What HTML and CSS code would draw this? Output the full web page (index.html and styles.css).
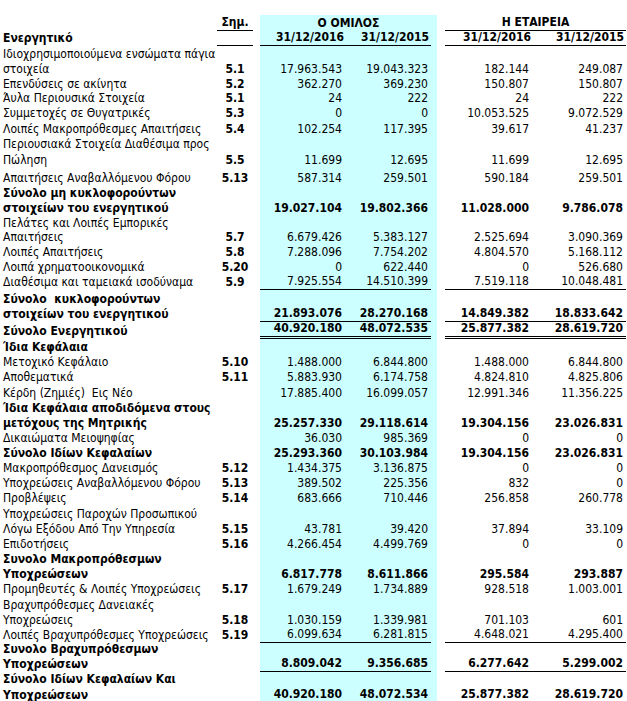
FILE: index.html
```html
<!DOCTYPE html>
<html lang="el">
<head>
<meta charset="utf-8">
<title>Ισολογισμός</title>
<link rel="stylesheet" href="styles.css">
</head>
<body>
<table class="bs">
<colgroup>
<col class="c-lbl"><col class="c-note"><col class="c-sp1"><col class="c-a"><col class="c-b"><col class="c-sp2"><col class="c-sp3"><col class="c-c"><col class="c-d">
</colgroup>
<tbody>
<tr class="h16"><td></td><td class="note hd ul">Σημ.</td><td></td><td class="cy grp" colspan="3">Ο ΟΜΙΛΟΣ</td><td></td><td class="grp ul" colspan="2">Η ΕΤΑΙΡΕΙΑ</td></tr>
<tr class="bold"><td class="lbl">Ενεργητικό</td><td class="note ul"></td><td></td><td class="num a cy ul hdr">31/12/2016</td><td class="num b cy ul hdr">31/12/2015</td><td class="cy"></td><td></td><td class="num c ul hdr">31/12/2016</td><td class="num d ul hdr">31/12/2015</td></tr>
<tr class="h16"><td class="lbl">Ιδιοχρησιμοποιούμενα ενσώματα πάγια</td><td class="note"></td><td></td><td class="num a cy"></td><td class="num b cy"></td><td class="cy"></td><td></td><td class="num c"></td><td class="num d"></td></tr>
<tr><td class="lbl">στοιχεία</td><td class="note">5.1</td><td></td><td class="num a cy">17.963.543</td><td class="num b cy">19.043.323</td><td class="cy"></td><td></td><td class="num c">182.144</td><td class="num d">249.087</td></tr>
<tr><td class="lbl">Επενδύσεις σε ακίνητα</td><td class="note">5.2</td><td></td><td class="num a cy">362.270</td><td class="num b cy">369.230</td><td class="cy"></td><td></td><td class="num c">150.807</td><td class="num d">150.807</td></tr>
<tr class="h14"><td class="lbl">Άυλα Περιουσικά Στοιχεία</td><td class="note">5.1</td><td></td><td class="num a cy">24</td><td class="num b cy">222</td><td class="cy"></td><td></td><td class="num c">24</td><td class="num d">222</td></tr>
<tr><td class="lbl">Συμμετοχές σε Θυγατρικές</td><td class="note">5.3</td><td></td><td class="num a cy">0</td><td class="num b cy">0</td><td class="cy"></td><td></td><td class="num c">10.053.525</td><td class="num d">9.072.529</td></tr>
<tr class="h16"><td class="lbl">Λοιπές Μακροπρόθεσμες Απαιτήσεις</td><td class="note">5.4</td><td></td><td class="num a cy">102.254</td><td class="num b cy">117.395</td><td class="cy"></td><td></td><td class="num c">39.617</td><td class="num d">41.237</td></tr>
<tr><td class="lbl">Περιουσιακά Στοιχεία Διαθέσιμα προς</td><td class="note"></td><td></td><td class="num a cy"></td><td class="num b cy"></td><td class="cy"></td><td></td><td class="num c"></td><td class="num d"></td></tr>
<tr class="h16"><td class="lbl">Πώληση</td><td class="note">5.5</td><td></td><td class="num a cy">11.699</td><td class="num b cy">12.695</td><td class="cy"></td><td></td><td class="num c">11.699</td><td class="num d">12.695</td></tr>
<tr class="h18"><td class="lbl">Απαιτήσεις Αναβαλλόμενου Φόρου</td><td class="note">5.13</td><td></td><td class="num a cy">587.314</td><td class="num b cy">259.501</td><td class="cy"></td><td></td><td class="num c">590.184</td><td class="num d">259.501</td></tr>
<tr class="bold"><td class="lbl">Σύνολο μη κυκλοφορούντων</td><td class="note"></td><td></td><td class="num a cy"></td><td class="num b cy"></td><td class="cy"></td><td></td><td class="num c"></td><td class="num d"></td></tr>
<tr class="bold"><td class="lbl">στοιχείων του ενεργητικού</td><td class="note"></td><td></td><td class="num a cy">19.027.104</td><td class="num b cy">19.802.366</td><td class="cy"></td><td></td><td class="num c">11.028.000</td><td class="num d">9.786.078</td></tr>
<tr><td class="lbl">Πελάτες και Λοιπές Εμπορικές</td><td class="note"></td><td></td><td class="num a cy"></td><td class="num b cy"></td><td class="cy"></td><td></td><td class="num c"></td><td class="num d"></td></tr>
<tr class="h14"><td class="lbl">Απαιτήσεις</td><td class="note">5.7</td><td></td><td class="num a cy">6.679.426</td><td class="num b cy">5.383.127</td><td class="cy"></td><td></td><td class="num c">2.525.694</td><td class="num d">3.090.369</td></tr>
<tr><td class="lbl">Λοιπές Απαιτήσεις</td><td class="note">5.8</td><td></td><td class="num a cy">7.288.096</td><td class="num b cy">7.754.202</td><td class="cy"></td><td></td><td class="num c">4.804.570</td><td class="num d">5.168.112</td></tr>
<tr><td class="lbl">Λοιπά χρηματοοικονομικά</td><td class="note">5.20</td><td></td><td class="num a cy">0</td><td class="num b cy">622.440</td><td class="cy"></td><td></td><td class="num c">0</td><td class="num d">526.680</td></tr>
<tr><td class="lbl">Διαθέσιμα και ταμειακά ισοδύναμα</td><td class="note">5.9</td><td></td><td class="num a cy ul">7.925.554</td><td class="num b cy ul">14.510.399</td><td class="cy"></td><td></td><td class="num c ul">7.519.118</td><td class="num d ul">10.048.481</td></tr>
<tr class="bold h17"><td class="lbl">Σύνολο&nbsp; κυκλοφορούντων</td><td class="note"></td><td></td><td class="num a cy"></td><td class="num b cy"></td><td class="cy"></td><td></td><td class="num c"></td><td class="num d"></td></tr>
<tr class="bold"><td class="lbl">στοιχείων του ενεργητικού</td><td class="note"></td><td></td><td class="num a cy ul">21.893.076</td><td class="num b cy ul">28.270.168</td><td class="cy"></td><td></td><td class="num c ul">14.849.382</td><td class="num d ul">18.833.642</td></tr>
<tr class="bold"><td class="lbl">Σύνολο Ενεργητικού</td><td class="note"></td><td></td><td class="num a cy dbl">40.920.180</td><td class="num b cy dbl">48.072.535</td><td class="cy"></td><td></td><td class="num c dbl">25.877.382</td><td class="num d dbl">28.619.720</td></tr>
<tr class="bold h16"><td class="lbl">Ίδια Κεφάλαια</td><td class="note"></td><td></td><td class="num a cy"></td><td class="num b cy"></td><td class="cy"></td><td></td><td class="num c"></td><td class="num d"></td></tr>
<tr><td class="lbl">Μετοχικό Κεφάλαιο</td><td class="note">5.10</td><td></td><td class="num a cy">1.488.000</td><td class="num b cy">6.844.800</td><td class="cy"></td><td></td><td class="num c">1.488.000</td><td class="num d">6.844.800</td></tr>
<tr><td class="lbl">Αποθεματικά</td><td class="note">5.11</td><td></td><td class="num a cy">5.883.930</td><td class="num b cy">6.174.758</td><td class="cy"></td><td></td><td class="num c">4.824.810</td><td class="num d">4.825.806</td></tr>
<tr class="h16"><td class="lbl">Κέρδη (Ζημιές)&nbsp; Εις Νέο</td><td class="note"></td><td></td><td class="num a cy">17.885.400</td><td class="num b cy">16.099.057</td><td class="cy"></td><td></td><td class="num c">12.991.346</td><td class="num d">11.356.225</td></tr>
<tr class="bold"><td class="lbl">Ίδια Κεφάλαια αποδιδόμενα στους</td><td class="note"></td><td></td><td class="num a cy"></td><td class="num b cy"></td><td class="cy"></td><td></td><td class="num c"></td><td class="num d"></td></tr>
<tr class="bold"><td class="lbl">μετόχους της Μητρικής</td><td class="note"></td><td></td><td class="num a cy">25.257.330</td><td class="num b cy">29.118.614</td><td class="cy"></td><td></td><td class="num c">19.304.156</td><td class="num d">23.026.831</td></tr>
<tr><td class="lbl">Δικαιώματα Μειοψηφίας</td><td class="note"></td><td></td><td class="num a cy">36.030</td><td class="num b cy">985.369</td><td class="cy"></td><td></td><td class="num c">0</td><td class="num d">0</td></tr>
<tr class="bold"><td class="lbl">Σύνολο Ιδίων Κεφαλαίων</td><td class="note"></td><td></td><td class="num a cy">25.293.360</td><td class="num b cy">30.103.984</td><td class="cy"></td><td></td><td class="num c">19.304.156</td><td class="num d">23.026.831</td></tr>
<tr><td class="lbl">Μακροπρόθεσμος Δανεισμός</td><td class="note">5.12</td><td></td><td class="num a cy">1.434.375</td><td class="num b cy">3.136.875</td><td class="cy"></td><td></td><td class="num c">0</td><td class="num d">0</td></tr>
<tr><td class="lbl">Υποχρεώσεις Αναβαλλόμενου Φόρου</td><td class="note">5.13</td><td></td><td class="num a cy">389.502</td><td class="num b cy">225.356</td><td class="cy"></td><td></td><td class="num c">832</td><td class="num d">0</td></tr>
<tr><td class="lbl">Προβλέψεις</td><td class="note">5.14</td><td></td><td class="num a cy">683.666</td><td class="num b cy">710.446</td><td class="cy"></td><td></td><td class="num c">256.858</td><td class="num d">260.778</td></tr>
<tr class="h16"><td class="lbl">Υποχρεώσεις Παροχών Προσωπικού</td><td class="note"></td><td></td><td class="num a cy"></td><td class="num b cy"></td><td class="cy"></td><td></td><td class="num c"></td><td class="num d"></td></tr>
<tr><td class="lbl">Λόγω Εξόδου Από Την Υπηρεσία</td><td class="note">5.15</td><td></td><td class="num a cy">43.781</td><td class="num b cy">39.420</td><td class="cy"></td><td></td><td class="num c">37.894</td><td class="num d">33.109</td></tr>
<tr><td class="lbl">Επιδοτήσεις</td><td class="note">5.16</td><td></td><td class="num a cy">4.266.454</td><td class="num b cy">4.499.769</td><td class="cy"></td><td></td><td class="num c">0</td><td class="num d">0</td></tr>
<tr class="bold"><td class="lbl">Συνολο Μακροπρόθεσμων</td><td class="note"></td><td></td><td class="num a cy"></td><td class="num b cy"></td><td class="cy"></td><td></td><td class="num c"></td><td class="num d"></td></tr>
<tr class="bold"><td class="lbl">Υποχρεώσεων</td><td class="note"></td><td></td><td class="num a cy">6.817.778</td><td class="num b cy">8.611.866</td><td class="cy"></td><td></td><td class="num c">295.584</td><td class="num d">293.887</td></tr>
<tr><td class="lbl">Προμηθευτές &amp; Λοιπές Υποχρεώσεις</td><td class="note">5.17</td><td></td><td class="num a cy">1.679.249</td><td class="num b cy">1.734.889</td><td class="cy"></td><td></td><td class="num c">928.518</td><td class="num d">1.003.001</td></tr>
<tr class="h16"><td class="lbl">Βραχυπρόθεσμες Δανειακές</td><td class="note"></td><td></td><td class="num a cy"></td><td class="num b cy"></td><td class="cy"></td><td></td><td class="num c"></td><td class="num d"></td></tr>
<tr><td class="lbl">Υποχρεώσεις</td><td class="note">5.18</td><td></td><td class="num a cy">1.030.159</td><td class="num b cy">1.339.981</td><td class="cy"></td><td></td><td class="num c">701.103</td><td class="num d">601</td></tr>
<tr><td class="lbl">Λοιπές Βραχυπρόθεσμες Υποχρεώσεις</td><td class="note">5.19</td><td></td><td class="num a cy ul">6.099.634</td><td class="num b cy ul">6.281.815</td><td class="cy"></td><td></td><td class="num c ul">4.648.021</td><td class="num d ul">4.295.400</td></tr>
<tr class="bold h14"><td class="lbl">Συνολο Βραχυπρόθεσμων</td><td class="note"></td><td></td><td class="num a cy"></td><td class="num b cy"></td><td class="cy"></td><td></td><td class="num c"></td><td class="num d"></td></tr>
<tr class="bold"><td class="lbl">Υποχρεώσεων</td><td class="note"></td><td></td><td class="num a cy ul">8.809.042</td><td class="num b cy ul">9.356.685</td><td class="cy"></td><td></td><td class="num c ul">6.277.642</td><td class="num d ul">5.299.002</td></tr>
<tr class="bold"><td class="lbl">Σύνολο Ιδίων Κεφαλαίων Και</td><td class="note"></td><td></td><td class="num a cy"></td><td class="num b cy"></td><td class="cy"></td><td></td><td class="num c"></td><td class="num d"></td></tr>
<tr class="bold h16"><td class="lbl">Υποχρεώσεων</td><td class="note"></td><td></td><td class="num a cy ul">40.920.180</td><td class="num b cy ul">48.072.534</td><td class="cy"></td><td></td><td class="num c ul">25.877.382</td><td class="num d ul">28.619.720</td></tr>
</tbody>
</table>
</body>
</html>
```

FILE: styles.css
```css
html, body {
  margin: 0;
  padding: 0;
  background: #ffffff;
}

body {
  font-family: "DejaVu Sans Condensed", "DejaVu Sans", "Liberation Sans", sans-serif;
  font-size: 12px;
  color: #000000;
}

.bs {
  border-collapse: separate;
  border-spacing: 0;
  table-layout: fixed;
  width: 626px;
  margin-top: 15px;
}

.c-lbl { width: 217px; }
.c-note { width: 36px; }
.c-sp1 { width: 7px; }
.c-a { width: 86px; }
.c-b { width: 85px; }
.c-sp2 { width: 6px; }
.c-sp3 { width: 8px; }
.c-c { width: 88px; }
.c-d { width: 93px; }

.bs tr { height: 15px; }
.bs tr.h14 { height: 14px; }
.bs tr.h16 { height: 16px; }
.bs tr.h17 { height: 17px; }
.bs tr.h18 { height: 18px; }

.bs td {
  padding: 0 0 2px 0;
  vertical-align: bottom;
  line-height: 12px;
  white-space: nowrap;
  overflow: visible;
}

.bold td { font-weight: bold; }

.lbl { padding-left: 3px !important; }

.note {
  text-align: center;
  font-weight: bold;
}

.num { text-align: right; }
.bs td.a, .bs td.c { padding-right: 4px; }
.bs td.b, .bs td.d { padding-right: 3px; }
.bs td.hdr { padding-right: 2px; }

.grp {
  text-align: center;
  font-weight: bold;
}

.hd { font-weight: bold; }

.cy { background: #ccffff; }

.ul { border-bottom: 1px solid #000000; }
.dbl { border-bottom: 3px double #000000; }
```
